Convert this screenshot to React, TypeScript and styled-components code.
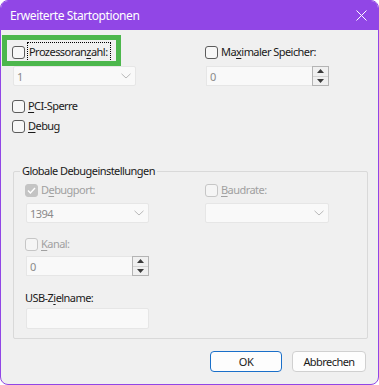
import React from "react";
import styled, { createGlobalStyle, css } from "styled-components";

const GlobalStyle = createGlobalStyle`
  html, body { margin: 0; padding: 0; background: #ffffff; }
  body { font-family: "Noto Sans", "Open Sans", sans-serif; font-size: 11px; color: #1a1a1a; }
  * { box-sizing: border-box; }
`;

const PURPLE = "#9146e6";
const SPACING = "-0.55px";

const Window = styled.div`
  position: relative;
  width: 379px;
  height: 385px;
  border: 1px solid ${PURPLE};
  border-radius: 8px;
  background: #f0f0f0;
  overflow: hidden;
  display: flex;
  flex-direction: column;
`;

const TitleBar = styled.div`
  height: 29px;
  background: ${PURPLE};
  display: flex;
  align-items: center;
  justify-content: space-between;
  padding: 0 9px 0 9px;
  color: #ffffff;
  font-size: 12px;
  letter-spacing: -0.4px;
`;

const CloseIcon = styled.svg`
  width: 11px;
  height: 11px;
  margin-right: 2px;
`;

const Content = styled.div`
  flex: 1;
  display: flex;
  flex-direction: column;
  padding: 12px 11px 0 11px;
`;

const TopGrid = styled.div`
  display: grid;
  grid-template-columns: 193px 1fr;
`;

const Column = styled.div`
  display: flex;
  flex-direction: column;
  gap: 4px;
`;

const CheckRow = styled.label<{ $mt?: number }>`
  display: flex;
  align-items: center;
  height: 20px;
  gap: 3px;
  margin-top: ${(p) => p.$mt ?? 0}px;
  white-space: nowrap;
`;

const Box = styled.span<{ $disabled?: boolean; $checked?: boolean }>`
  width: 13px;
  height: 13px;
  flex: none;
  border-radius: 3px;
  border: 1px solid ${(p) => (p.$disabled ? "#c6c6c6" : "#5c5c5c")};
  background: ${(p) => (p.$disabled ? "#f5f5f5" : "#f7f7f7")};
  display: flex;
  align-items: center;
  justify-content: center;
  ${(p) =>
    p.$checked &&
    css`
      background: #c4c4c4;
      border-color: #c4c4c4;
    `}
`;

const LabelText = styled.span<{ $disabled?: boolean; $focus?: boolean }>`
  color: ${(p) => (p.$disabled ? "#a0a0a0" : "#1a1a1a")};
  letter-spacing: ${SPACING};
  line-height: 16px;
  ${(p) =>
    p.$focus &&
    css`
      outline: 1px dotted #000;
      outline-offset: 0px;
      padding: 1px 2px 1px 1px;
    `}
  u {
    text-decoration: underline;
    text-underline-offset: 2px;
  }
`;

const Field = styled.div<{ $w: number; $h?: number; $ml?: number; $mt?: number }>`
  width: ${(p) => p.$w}px;
  height: ${(p) => p.$h ?? 20}px;
  margin-left: ${(p) => p.$ml ?? 0}px;
  margin-top: ${(p) => p.$mt ?? 0}px;
  border: 1px solid #e6e6e6;
  border-radius: 2px;
  background: #f9f9f9;
  display: flex;
  align-items: center;
  color: #8a8a8a;
  padding-left: 3px;
  letter-spacing: ${SPACING};
`;

const FieldText = styled.span`
  flex: 1;
`;

const Chevron = styled.svg`
  width: 10px;
  height: 6px;
  margin-right: 4px;
`;

const SpinWrap = styled.div<{ $w: number; $ml?: number; $mt?: number }>`
  width: ${(p) => p.$w}px;
  height: 20px;
  margin-left: ${(p) => p.$ml ?? 0}px;
  margin-top: ${(p) => p.$mt ?? 0}px;
  display: flex;
`;

const SpinInput = styled.div`
  flex: 1;
  height: 100%;
  border: 1px solid #e6e6e6;
  border-right: none;
  background: #f9f9f9;
  color: #8a8a8a;
  display: flex;
  align-items: center;
  padding-left: 3px;
`;

const SpinButtons = styled.div`
  width: 17px;
  height: 100%;
  display: flex;
  flex-direction: column;
  border: 1px solid #b4b4b4;
  background: #f0f0f0;
`;

const SpinBtn = styled.div<{ $top?: boolean }>`
  flex: 1;
  display: flex;
  align-items: center;
  justify-content: center;
  ${(p) => p.$top && css`border-bottom: 1px solid #d4d4d4;`}
`;

const Tri = styled.svg`
  width: 7px;
  height: 4px;
`;

const Group = styled.div`
  position: relative;
  margin: 35px 0 0 1px;
  width: 355px;
  border: 1px solid #d9d9d9;
  border-radius: 2px;
  padding: 8px 0 9px 11px;
`;

const Legend = styled.span`
  position: absolute;
  top: -9px;
  left: 6px;
  padding: 0 2px;
  background: #f0f0f0;
  line-height: 16px;
  letter-spacing: ${SPACING};
`;

const GroupGrid = styled.div`
  display: grid;
  grid-template-columns: 180px 1fr;
`;

const GroupCol = styled.div`
  display: flex;
  flex-direction: column;
`;

const PlainLabel = styled.div<{ $mt?: number }>`
  line-height: 16px;
  margin-top: ${(p) => p.$mt ?? 0}px;
  letter-spacing: ${SPACING};
  u {
    text-underline-offset: 2px;
  }
`;

const ButtonRow = styled.div`
  display: flex;
  justify-content: flex-end;
  gap: 10px;
  margin-top: 12px;
  padding-right: 1px;
`;

const Button = styled.button<{ $default?: boolean; $w: number }>`
  width: ${(p) => p.$w}px;
  height: 21px;
  font-family: inherit;
  font-size: 11px;
  letter-spacing: ${SPACING};
  color: #1a1a1a;
  background: #fdfdfd;
  border: 1px solid ${(p) => (p.$default ? "#1a6fc9" : "#d0d0d0")};
  border-radius: 4px;
  padding: 0;
`;

const Highlight = styled.div`
  position: absolute;
  left: 1px;
  top: 34px;
  width: 119px;
  height: 31px;
  border: 5px solid #4cb74c;
  pointer-events: none;
`;

const Check = () => (
  <svg width="9" height="7" viewBox="0 0 9 7">
    <path d="M1 3.6 L3.4 6 L8 1" fill="none" stroke="#ffffff" strokeWidth="1.4" />
  </svg>
);

const ChevronDown = () => (
  <Chevron viewBox="0 0 10 6">
    <path d="M0.5 0.8 L5 5 L9.5 0.8" fill="none" stroke="#b8b8b8" strokeWidth="1" />
  </Chevron>
);

const Dropdown: React.FC<{ w: number; ml?: number; mt?: number; value?: string }> = ({ w, ml, mt, value }) => (
  <Field $w={w} $ml={ml} $mt={mt}>
    <FieldText>{value}</FieldText>
    <ChevronDown />
  </Field>
);

const Spin: React.FC<{ w: number; ml?: number; mt?: number; value: string }> = ({ w, ml, mt, value }) => (
  <SpinWrap $w={w} $ml={ml} $mt={mt}>
    <SpinInput>{value}</SpinInput>
    <SpinButtons>
      <SpinBtn $top>
        <Tri viewBox="0 0 7 4">
          <path d="M0 4 L3.5 0 L7 4 Z" fill="#3a3a3a" />
        </Tri>
      </SpinBtn>
      <SpinBtn>
        <Tri viewBox="0 0 7 4">
          <path d="M0 0 L7 0 L3.5 4 Z" fill="#3a3a3a" />
        </Tri>
      </SpinBtn>
    </SpinButtons>
  </SpinWrap>
);

export default function App() {
  return (
    <>
      <GlobalStyle />
      <Window>
        <TitleBar>
          <span>Erweiterte Startoptionen</span>
          <CloseIcon viewBox="0 0 11 11">
            <path d="M0.5 0.5 L10.5 10.5 M10.5 0.5 L0.5 10.5" stroke="#ffffff" strokeWidth="1" />
          </CloseIcon>
        </TitleBar>
        <Content>
          <TopGrid>
            <Column>
              <CheckRow>
                <Box />
                <LabelText $focus>
                  Prozessoran<u>z</u>ahl:
                </LabelText>
              </CheckRow>
              <Dropdown w={123} ml={1} value="1" />
            </Column>
            <Column>
              <CheckRow>
                <Box />
                <LabelText>
                  Ma<u>x</u>imaler Speicher:
                </LabelText>
              </CheckRow>
              <Spin w={123} ml={1} value="0" />
            </Column>
          </TopGrid>
          <CheckRow $mt={10}>
            <Box />
            <LabelText>
              <u>P</u>CI-Sperre
            </LabelText>
          </CheckRow>
          <CheckRow>
            <Box />
            <LabelText>
              <u>D</u>ebug
            </LabelText>
          </CheckRow>
          <Group>
            <Legend>Globale Debugeinstellungen</Legend>
            <GroupGrid>
              <GroupCol>
                <CheckRow>
                  <Box $disabled $checked>
                    <Check />
                  </Box>
                  <LabelText $disabled>
                    D<u>e</u>bugport:
                  </LabelText>
                </CheckRow>
                <Dropdown w={123} ml={1} mt={3} value="1394" />
              </GroupCol>
              <GroupCol>
                <CheckRow>
                  <Box $disabled />
                  <LabelText $disabled>
                    <u>B</u>audrate:
                  </LabelText>
                </CheckRow>
                <Dropdown w={124} mt={3} />
              </GroupCol>
            </GroupGrid>
            <CheckRow $mt={11}>
              <Box $disabled />
              <LabelText $disabled>
                <u>K</u>anal:
              </LabelText>
            </CheckRow>
            <Spin w={123} ml={1} mt={2} value="0" />
            <PlainLabel $mt={14}>
              USB-Z<u>i</u>elname:
            </PlainLabel>
            <Field $w={123} $h={21} $ml={1} $mt={2} />
          </Group>
          <ButtonRow>
            <Button $default $w={72}>OK</Button>
            <Button $w={74}>Abbrechen</Button>
          </ButtonRow>
        </Content>
        <Highlight />
      </Window>
    </>
  );
}
